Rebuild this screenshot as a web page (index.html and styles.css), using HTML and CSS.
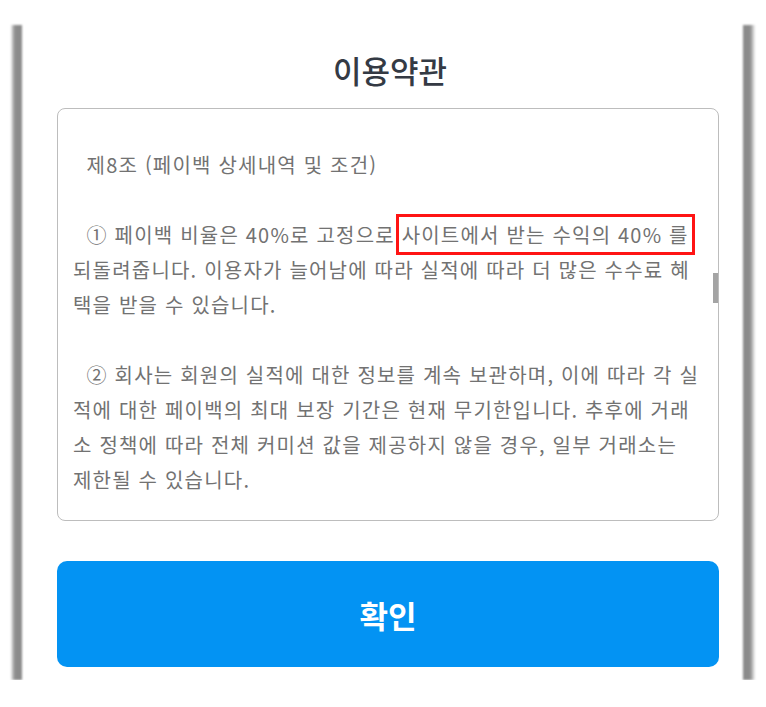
FILE: index.html
```html
<!DOCTYPE html>
<html lang="ko">
<head>
  <meta charset="UTF-8">
  <title>이용약관</title>
  <meta name="viewport" content="width=device-width, initial-scale=1">
  <link rel="stylesheet" href="styles.css">
</head>
<body>

  <div class="frame">
    <div class="edge edge-left"></div>

    <div class="card">
      <h1>이용약관</h1>

      <div class="terms">
        <p>  제8조 (페이백 상세내역 및 조건)</p>
        <p>  ① 페이백 비율은 40%로 고정으로 <span class="mark">사이트에서 받는 수익의 40% 를</span> 되돌려줍니다. 이용자가 늘어남에 따라 실적에 따라 더 많은 수수료 혜택을 받을 수 있습니다.</p>
        <p>  ② 회사는 회원의 실적에 대한 정보를 계속 보관하며, 이에 따라 각 실적에 대한 페이백의 최대 보장 기간은 현재 무기한입니다. 추후에 거래소 정책에 따라 전체 커미션 값을 제공하지 않을 경우, 일부 거래소는 제한될 수 있습니다.</p>
        <div class="thumb"></div>
      </div>

      <button class="confirm">확인</button>
    </div>

    <div class="edge edge-right"></div>
  </div>

</body>
</html>
```

FILE: styles.css
```css
body {
  margin: 0;
  background-color: #fff;
  font-family: "Noto Sans CJK KR", "Noto Sans", sans-serif;
}

.frame {
  display: flex;
  height: 655px;
  margin: 25px 11px 0;
}

.edge {
  width: 11px;
  filter: blur(1px);
}

.edge-left {
  background: linear-gradient(to right, rgba(140, 140, 140, 0.2), #8c8c8c 35%, #8a8a8a);
}

.edge-right {
  width: 12px;
  background: linear-gradient(to right, #8a8a8a, #8c8c8c 60%, rgba(140, 140, 140, 0.1));
}

.card {
  flex: 1;
  display: flex;
  flex-direction: column;
  padding: 25px 24px 13px 35px;
  background-color: #fff;
}

h1 {
  margin: 0 0 18px;
  text-align: center;
  font-size: 31px;
  line-height: 40px;
  font-weight: 500;
  color: #343a44;
  padding-left: 4px;
}

.terms {
  position: relative;
  flex-shrink: 0;
  box-sizing: border-box;
  height: 413px;
  border: 1px solid #bdbdbd;
  border-radius: 8px;
  padding: 38px 18px 0 15px;
}

.terms p {
  margin: 0 0 35px;
  white-space: pre-wrap;
  font-size: 20px;
  line-height: 35px;
  letter-spacing: 1.2px;
  color: #727272;
}

.mark {
  outline: 3px solid #ff1414;
  outline-offset: 3px;
}

.thumb {
  position: absolute;
  top: 164px;
  right: 0;
  width: 5px;
  height: 30px;
  background-color: #a4a4a4;
}

.confirm {
  flex-shrink: 0;
  margin-top: 40px;
  height: 106px;
  border: none;
  border-radius: 10px;
  background-color: #0393f3;
  color: #fff;
  font-family: inherit;
  font-size: 31px;
  font-weight: 700;
  cursor: pointer;
}
```
